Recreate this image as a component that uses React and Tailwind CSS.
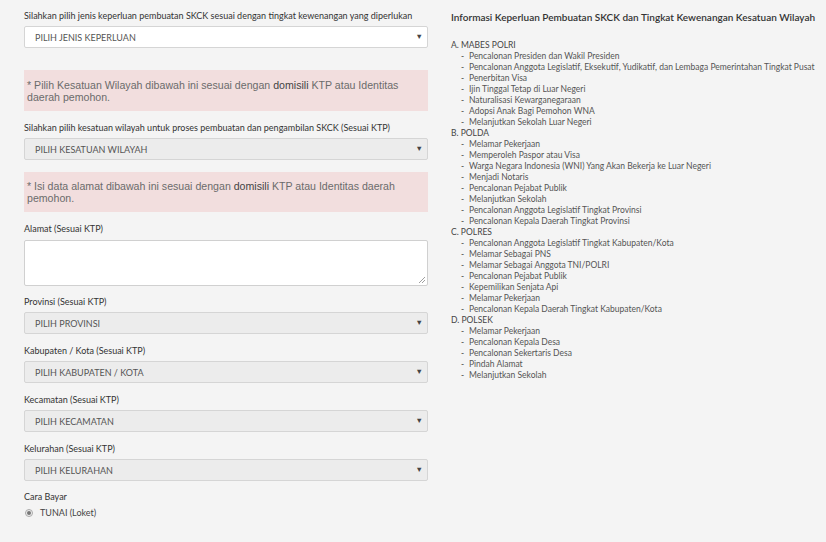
import React from "react";

const font = { fontFamily: "Lato, 'Noto Sans', sans-serif" };

function Select({ text, disabled }) {
  return (
    <div
      className={`h-[22px] w-full flex items-center justify-between rounded-[2px] border border-[#d5d5d5] pl-[10px] pr-[4px] ${disabled ? "bg-[#ececec]" : "bg-white"}`}
    >
      <span className="text-[9px] leading-none text-[#555]">{text}</span>
      <span className="text-[7.5px] leading-none text-[#444]">▼</span>
    </div>
  );
}

function Label({ children, className = "" }) {
  return (
    <div className={`text-[9px] leading-[12px] text-[#333] mb-[4px] whitespace-nowrap ${className}`}>{children}</div>
  );
}

function Alert({ children, className = "" }) {
  return (
    <div
      className={`bg-[#f2dede] pl-[3px] pr-2 text-[10.6px] leading-[12px] text-[#6b6b6b] ${className}`}
      style={{ fontFamily: "'Liberation Sans', Arial, sans-serif" }}
    >
      {children}
    </div>
  );
}

const sections = [
  {
    title: "A. MABES POLRI",
    items: [
      "Pencalonan Presiden dan Wakil Presiden",
      "Pencalonan Anggota Legislatif, Eksekutif, Yudikatif, dan Lembaga Pemerintahan Tingkat Pusat",
      "Penerbitan Visa",
      "Ijin Tinggal Tetap di Luar Negeri",
      "Naturalisasi Kewarganegaraan",
      "Adopsi Anak Bagi Pemohon WNA",
      "Melanjutkan Sekolah Luar Negeri",
    ],
  },
  {
    title: "B. POLDA",
    items: [
      "Melamar Pekerjaan",
      "Memperoleh Paspor atau Visa",
      "Warga Negara Indonesia (WNI) Yang Akan Bekerja ke Luar Negeri",
      "Menjadi Notaris",
      "Pencalonan Pejabat Publik",
      "Melanjutkan Sekolah",
      "Pencalonan Anggota Legislatif Tingkat Provinsi",
      "Pencalonan Kepala Daerah Tingkat Provinsi",
    ],
  },
  {
    title: "C. POLRES",
    items: [
      "Pencalonan Anggota Legislatif Tingkat Kabupaten/Kota",
      "Melamar Sebagai PNS",
      "Melamar Sebagai Anggota TNI/POLRI",
      "Pencalonan Pejabat Publik",
      "Kepemilikan Senjata Api",
      "Melamar Pekerjaan",
      "Pencalonan Kepala Daerah Tingkat Kabupaten/Kota",
    ],
  },
  {
    title: "D. POLSEK",
    items: [
      "Melamar Pekerjaan",
      "Pencalonan Kepala Desa",
      "Pencalonan Sekertaris Desa",
      "Pindah Alamat",
      "Melanjutkan Sekolah",
    ],
  },
];

export default function App() {
  return (
    <div className="min-h-[542px] w-[826px] bg-[#f4f4f4] flex pl-6" style={font}>
      <div className="w-[404px] shrink-0 pt-[10px]">
        <Label>Silahkan pilih jenis keperluan pembuatan SKCK sesuai dengan tingkat kewenangan yang diperlukan</Label>
        <Select text="PILIH JENIS KEPERLUAN" />
        <Alert className="mt-[22px] h-[41px] pt-[9px]">
          * Pilih Kesatuan Wilayah dibawah ini sesuai dengan <span className="text-[#444]">domisili</span> KTP atau Identitas daerah pemohon.
        </Alert>
        <Label className="mt-[11px]">Silahkan pilih kesatuan wilayah untuk proses pembuatan dan pengambilan SKCK (Sesuai KTP)</Label>
        <Select text="PILIH KESATUAN WILAYAH" disabled />
        <Alert className="mt-[12px] h-[40px] pt-[8px]">
          * Isi data alamat dibawah ini sesuai dengan <span className="text-[#444]">domisili</span> KTP atau Identitas daerah pemohon.
        </Alert>
        <Label className="mt-[11px] mb-[5px]">Alamat (Sesuai KTP)</Label>
        <div className="relative h-[46px] w-full rounded-[2px] border border-[#d0d0d0] bg-white">
          <svg className="absolute right-[1px] bottom-[1px]" width="8" height="8" viewBox="0 0 8 8">
            <path d="M7 1L1 7M7 4L4 7" stroke="#888" strokeWidth="0.8" />
          </svg>
        </div>
        <Label className="mt-[10px]">Provinsi (Sesuai KTP)</Label>
        <Select text="PILIH PROVINSI" disabled />
        <Label className="mt-[11px]">Kabupaten / Kota (Sesuai KTP)</Label>
        <Select text="PILIH KABUPATEN / KOTA" disabled />
        <Label className="mt-[11px]">Kecamatan (Sesuai KTP)</Label>
        <Select text="PILIH KECAMATAN" disabled />
        <Label className="mt-[11px]">Kelurahan (Sesuai KTP)</Label>
        <Select text="PILIH KELURAHAN" disabled />
        <Label className="mt-[10px]">Cara Bayar</Label>
        <div className="flex items-center gap-[7px] pl-[1px]">
          <span className="flex h-[8px] w-[8px] items-center justify-center rounded-full border border-[#aaa] bg-[#eee]">
            <span className="h-[4px] w-[4px] rounded-full bg-[#777]" />
          </span>
          <span className="text-[9px] leading-[12px] text-[#444]">TUNAI (Loket)</span>
        </div>
      </div>
      <div className="ml-[23px] flex-1 pt-[10px]">
        <div className="whitespace-nowrap text-[10px] leading-[14px] font-semibold text-[#333]">
          Informasi Keperluan Pembuatan SKCK dan Tingkat Kewenangan Kesatuan Wilayah
        </div>
        <div className="mt-[16px] text-[8.5px] leading-[11px] text-[#444]">
          {sections.map((s) => (
            <div key={s.title}>
              <div>{s.title}</div>
              {s.items.map((it, i) => (
                <div key={i} className="flex">
                  <span className="w-[18px] pl-[10px]">-</span>
                  <span className="text-[#555]">{it}</span>
                </div>
              ))}
            </div>
          ))}
        </div>
      </div>
    </div>
  );
}
